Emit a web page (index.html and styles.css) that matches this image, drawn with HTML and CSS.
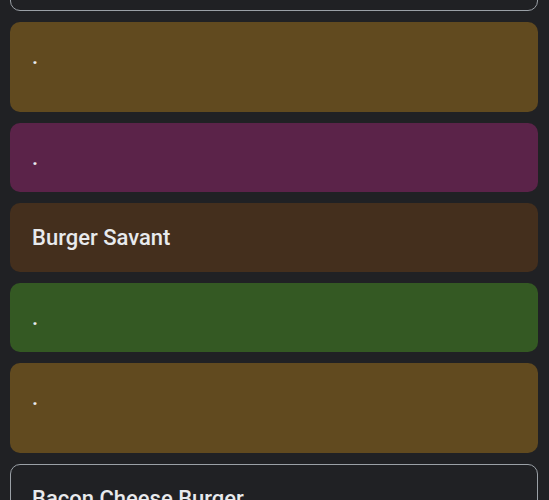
FILE: index.html
```html
<!DOCTYPE html>
<html lang="en">

<head>
    <meta charset="UTF-8" />
    <meta name="viewport" content="width=device-width, initial-scale=1.0" />
    <title>Notes</title>
    <link rel="stylesheet" href="styles.css">
</head>

<body>

    <!-- List of notes, scrolled a little past the first one -->
    <main class="feed">
        <div class="note note-outline"></div>
        <div class="note note-tall note-yellow">
            <h3 class="note-title">.</h3>
        </div>
        <div class="note note-pink">
            <h3 class="note-title">.</h3>
        </div>
        <div class="note note-brown">
            <h3 class="note-title">Burger Savant</h3>
        </div>
        <div class="note note-green">
            <h3 class="note-title">.</h3>
        </div>
        <div class="note note-tall note-yellow">
            <h3 class="note-title">.</h3>
        </div>
        <div class="note note-outline">
            <h3 class="note-title">Bacon Cheese Burger</h3>
        </div>
    </main>

</body>

</html>
```

FILE: styles.css
```css
/* Dark page background */
body {
    margin: 0;
    background-color: #202124;
    font-family: Roboto, "Open Sans", Arial, sans-serif;
    color: #e8eaed;
}

/* Column of note cards */
.feed {
    display: flex;
    flex-direction: column;
    gap: 11px;
    padding: 0 11px 0 10px;
    margin-top: -58px;
}

/* One note card */
.note {
    box-sizing: border-box;
    min-height: 69px;
    padding: 20px 22px 20px;
    border-radius: 10px;
}

/* Notes that keep an empty body line under the title */
.note-tall {
    min-height: 90px;
}

.note-title {
    margin: 0;
    font-size: 22px;
    font-weight: 500;
    line-height: 29px;
}

/* Card colours */
.note-outline {
    border: 1px solid #9aa0a6;
    padding: 19px 21px 19px;
}

.note-yellow {
    background-color: #614a1f;
}

.note-pink {
    background-color: #5b2349;
}

.note-brown {
    background-color: #442f1d;
}

.note-green {
    background-color: #345923;
}
```
